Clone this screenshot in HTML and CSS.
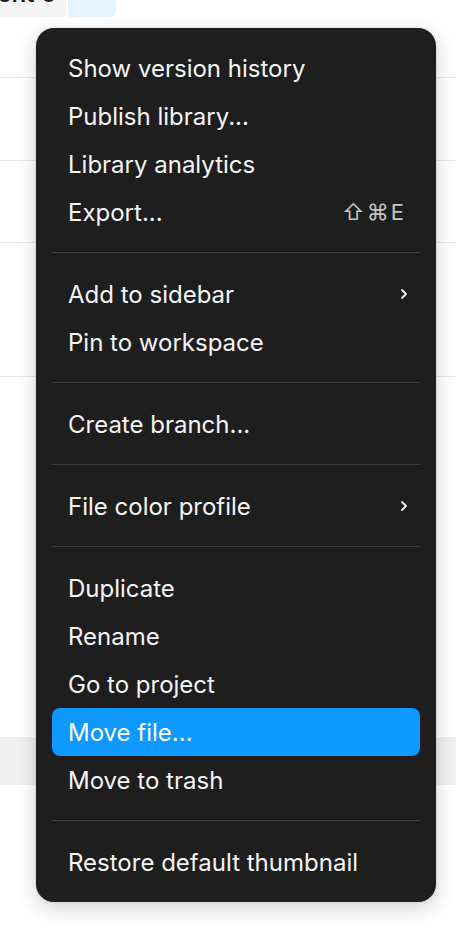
FILE: index.html
```html
<!DOCTYPE html>
<html>
<head>
<meta charset="utf-8">
<link rel="stylesheet" href="styles.css">
</head>
<body>
<div class="page">
  <div class="topbar">
    <div class="tab"><span class="tab-text">Component 6</span></div>
    <div class="tab-blue"></div>
  </div>
  <div class="row r1"></div>
  <div class="row r2"></div>
  <div class="row r3"></div>
  <div class="row r4"></div>
  <div class="spacer"></div>
  <div class="band"></div>
</div>

<div class="menu">
  <div class="item">Show version history</div>
  <div class="item">Publish library...</div>
  <div class="item">Library analytics</div>
  <div class="item"><span>Export...</span><span class="shortcut">⇧⌘E</span></div>
  <div class="sep"></div>
  <div class="item"><span>Add to sidebar</span>
    <svg class="chev" width="8" height="12" viewBox="0 0 8 12"><path d="M2 2 L6 6 L2 10" fill="none" stroke="#f2f2f2" stroke-width="1.8" stroke-linecap="round" stroke-linejoin="round"/></svg>
  </div>
  <div class="item">Pin to workspace</div>
  <div class="sep"></div>
  <div class="item">Create branch...</div>
  <div class="sep"></div>
  <div class="item"><span>File color profile</span>
    <svg class="chev" width="8" height="12" viewBox="0 0 8 12"><path d="M2 2 L6 6 L2 10" fill="none" stroke="#f2f2f2" stroke-width="1.8" stroke-linecap="round" stroke-linejoin="round"/></svg>
  </div>
  <div class="sep"></div>
  <div class="item">Duplicate</div>
  <div class="item">Rename</div>
  <div class="item">Go to project</div>
  <div class="item active">Move file...</div>
  <div class="item">Move to trash</div>
  <div class="sep"></div>
  <div class="item">Restore default thumbnail</div>
</div>
</body>
</html>
```
FILE: styles.css
```css
html, body {
  margin: 0;
  padding: 0;
  background: #ffffff;
  font-family: Inter, "Noto Sans", sans-serif;
}
.page {
  width: 456px;
  height: 932px;
  display: flex;
  flex-direction: column;
  overflow: hidden;
}
.topbar {
  height: 17px;
  display: flex;
  gap: 2px;
  flex: none;
}
.tab {
  width: 66px;
  height: 17px;
  background: #f5f5f5;
  overflow: hidden;
  display: flex;
  justify-content: flex-end;
  border-bottom-right-radius: 4px;
}
.tab-text {
  font-size: 24px;
  font-weight: 600;
  color: #1e1e1e;
  line-height: 24px;
  margin-top: -18px;
  margin-right: 10px;
  white-space: nowrap;
}
.tab-blue {
  width: 48px;
  height: 17px;
  background: #e5f4ff;
  border-bottom-left-radius: 2px;
  border-bottom-right-radius: 7px;
}
.row {
  flex: none;
  border-bottom: 1px solid #e6e6e6;
}
.r1 { height: 60px; }
.r2 { height: 82px; }
.r3 { height: 81px; }
.r4 { height: 133px; }
.spacer { height: 360px; flex: none; }
.band {
  height: 48px;
  background: #f0f0f0;
  flex: none;
}

.menu {
  position: absolute;
  left: 36px;
  top: 28px;
  width: 400px;
  box-sizing: border-box;
  padding: 16px;
  background: #1e1e1e;
  border-radius: 18px;
  box-shadow: 0 6px 20px rgba(0,0,0,0.18), 0 0 3px rgba(0,0,0,0.12);
}
.item {
  height: 48px;
  display: flex;
  align-items: center;
  justify-content: space-between;
  padding: 0 16px;
  color: #f5f5f5;
  font-size: 24px;
  border-radius: 8px;
  white-space: nowrap;
}
.item.active {
  background: #0d99ff;
  color: #ffffff;
}
.shortcut {
  color: #c4c4c4;
  font-size: 22px;
  letter-spacing: 2px;
  margin-right: -2px;
}
.chev {
  margin-right: -4px;
}
.sep {
  height: 1px;
  background: #3d3d3d;
  margin: 16px 0 17px;
}
```
